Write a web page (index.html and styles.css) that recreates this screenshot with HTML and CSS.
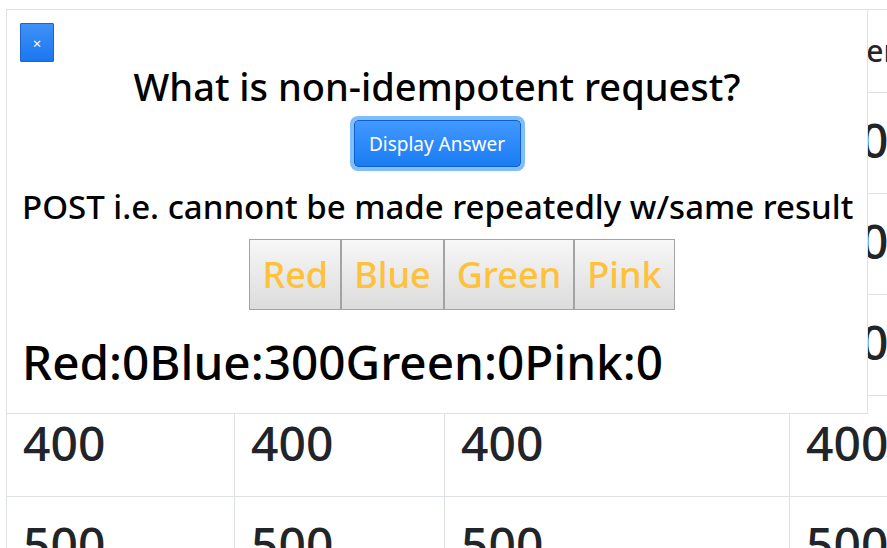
FILE: index.html
```html
<!DOCTYPE html>
<html lang="en">
<head>
<meta charset="utf-8">
<title>Jeopardy</title>
<link rel="stylesheet" href="styles.css">
</head>
<body>
<div class="page">
  <table class="board">
    <colgroup><col class="c1"><col class="c2"><col class="c3"><col class="c4"></colgroup>
    <thead>
      <tr class="head"><th>HTTP</th><th>REST</th><th>Methods</th><th>Power</th></tr>
    </thead>
    <tbody>
      <tr><td>100</td><td>100</td><td>100</td><td>100</td></tr>
      <tr><td>200</td><td>200</td><td>200</td><td>200</td></tr>
      <tr><td>300</td><td>300</td><td>300</td><td>300</td></tr>
      <tr><td>400</td><td>400</td><td>400</td><td>400</td></tr>
      <tr><td>500</td><td>500</td><td>500</td><td>500</td></tr>
    </tbody>
  </table>
  <div class="modal">
    <button class="close" type="button">×</button>
    <h1 class="question">What is non-idempotent request?</h1>
    <div class="reveal-row"><button class="reveal" type="button">Display Answer</button></div>
    <h2 class="answer">POST i.e. cannont be made repeatedly w/same result</h2>
    <div class="choices"><button class="choice" type="button">Red</button><button class="choice" type="button">Blue</button><button class="choice" type="button">Green</button><button class="choice" type="button">Pink</button></div>
    <div class="scores">Red:0Blue:300Green:0Pink:0</div>
  </div>
</div>
</body>
</html>
```

FILE: styles.css
```css
html, body {
  margin: 0;
  padding: 0;
  overflow: hidden;
  background: #fff;
}
body {
  font-family: "Noto Sans", "Open Sans", sans-serif;
}
.page {
  position: relative;
  padding: 9px 0 0 6px;
  width: 1100px;
}
.board {
  border-collapse: separate;
  border-spacing: 0;
  table-layout: fixed;
  width: 1000px;
  color: #212529;
}
.c1 { width: 228px; }
.c2 { width: 210px; }
.c3 { width: 345px; }
.c4 { width: 217px; }
.board th, .board td {
  border-left: 1px solid #dee2e6;
  border-top: 1px solid #dee2e6;
  text-align: left;
  vertical-align: top;
  padding: 12px 16px;
  white-space: nowrap;
  overflow: hidden;
}
.board th {
  font-size: 30px;
  font-weight: 500;
  line-height: 58px;
}
.board td {
  font-size: 48px;
  font-weight: 500;
  line-height: 72px;
  padding: 11px 16px 17px;
}
.modal {
  position: absolute;
  left: 6px;
  top: 9px;
  width: 862px;
  height: 405px;
  box-sizing: border-box;
  border: 1px solid #dee2e6;
  background: #fff;
  padding: 0 15px;
  color: #000;
}
.close {
  display: block;
  margin: 13px 0 0 -2px;
  width: 34px;
  height: 39px;
  padding: 0;
  border: 1px solid #1c66c9;
  border-radius: 1px;
  background: linear-gradient(#3f92f7, #1a77ee);
  color: #fff;
  font-family: inherit;
  font-size: 15px;
}
.question {
  margin: 0;
  text-align: center;
  font-size: 38px;
  font-weight: 500;
  line-height: 48px;
}
.reveal-row {
  display: flex;
  justify-content: center;
  margin-top: 10px;
}
.reveal {
  width: 167px;
  height: 47px;
  padding: 0;
  border: 1px solid #0d62c9;
  border-radius: 4px;
  background: linear-gradient(#4298ff, #1a7cf4);
  color: #fff;
  font-family: inherit;
  font-size: 19px;
  box-shadow: 0 0 0 4px rgba(0, 123, 255, 0.5);
}
.answer {
  margin: 18px 0 0;
  text-align: center;
  font-size: 33px;
  font-weight: 500;
  line-height: 44px;
  white-space: nowrap;
}
.choices {
  display: flex;
  justify-content: center;
  padding-left: 50px;
  margin-top: 10px;
}
.choice {
  height: 71px;
  padding: 0 12px;
  border: 1px solid #a3a3a3;
  border-radius: 0;
  background: linear-gradient(#f7f7f7, #dcdcdc);
  color: #ffc13a;
  font-family: inherit;
  font-size: 36px;
  font-weight: 500;
}
.scores {
  margin-top: 17px;
  font-size: 47.7px;
  font-weight: 500;
  line-height: 70px;
  white-space: nowrap;
}
```
